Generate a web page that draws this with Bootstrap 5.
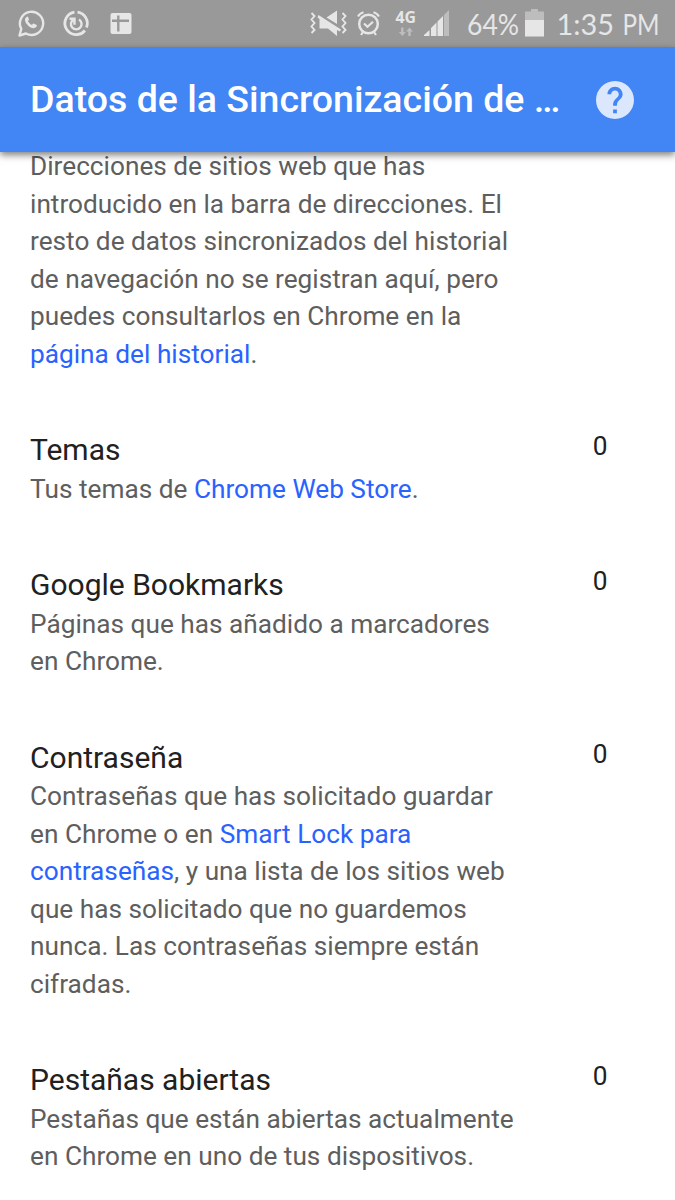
<!DOCTYPE html>
<html lang="es">
<head>
<meta charset="utf-8">
<meta name="viewport" content="width=device-width, initial-scale=1">
<title>Datos de la Sincronización de Chrome</title>
<link href="https://cdn.jsdelivr.net/npm/bootstrap@5.3.0/dist/css/bootstrap.min.css" rel="stylesheet">
<style>
body{font-family:Roboto,"Liberation Sans",sans-serif;background:#fff;color:#212121;height:1200px;overflow:hidden}
.status{height:47px;background:#999}
.topbar{height:105px;background:#4285f4;box-shadow:0 3px 7px rgba(0,0,0,.5);z-index:2;padding:0 41px 0 30px}
.topbar h1{font-size:37.5px;font-weight:500;line-height:1;letter-spacing:0;width:535px}
.content{padding:0 67.5px 0 30px;margin-top:-4px}
.entry{margin-bottom:57px}
.entry h2{font-size:30px;font-weight:400;line-height:40.5px;margin:0;letter-spacing:0}
.entry p{font-size:26.22px;line-height:37.5px;margin:0;color:#5e5e5e;white-space:nowrap}
.entry a{color:#2962ff;text-decoration:none}
.count{font-size:26.25px;line-height:32px}
</style>
</head>
<body>
<div class="status d-flex justify-content-between">
<svg width="150" height="47" viewBox="0 0 150 47" fill="none" stroke="#e6e6e6">
<path d="M19.500 35.500l1.800-6.700a11.600 11.600 0 1 1 4.600 4.700z" stroke-width="2.400" stroke-linejoin="round"/>
<path d="M26.600 17c-3 2-1.500 5.500 1.400 8.400s6.500 4 8.600 1.200c.5-.8.4-1.400-.3-1.800l-2.200-1.100c-.6-.3-1-.1-1.400.4l-.8.9c-1.800-.8-3.200-2.200-4-3.900l.9-1c.3-.4.3-.8.1-1.200l-.8-1.800c-.3-.6-.8-.7-1.500-.1z" fill="#e6e6e6" stroke="none"/>
<path d="M74.500 12.100A11.300 11.300 0 1 0 84.900 30.500M77.500 12.100A11.300 11.300 0 0 1 86.500 27.500" stroke-width="2.800"/>
<path d="M79 19.500a5.300 5.300 0 1 1-5.500 0M69.500 18.800h5v6" stroke-width="2.400"/>
<rect x="110.500" y="13" width="21" height="21" rx="2" fill="#e6e6e6" stroke="none"/>
<path d="M112 20.800h17M118.300 15.500v16" stroke="#999" stroke-width="2.400"/>
</svg>
<svg width="375" height="47" viewBox="300 0 375 47" fill="none" stroke="#e6e6e6">
<path d="M311.500 13l3 3-3 3.500 3 3.500-3 3.500 3 3.500-3 3M342.500 13l3 3-3 3.500 3 3.500-3 3.500 3 3.500-3 3" stroke-width="1.900"/>
<path d="M318.500 15l22.500 14.500-1.200 2L337 30V36l-9-7.500h-8.500V19l-2-1.500zM326.500 17.500L337 10.500V24z" fill="#e6e6e6" stroke="none"/>
<circle cx="368.500" cy="24" r="9.300" stroke-width="2.500"/>
<path d="M364 23.500l3.500 3.300 5.500-5M358 16.500q2-3.500 5.500-4.300M379 16.500q-2-3.500-5.500-4.300M363 32l-2 3M374 32l2 3" stroke-width="2.200"/>
<text x="395.500" y="23" textLength="20.500" lengthAdjust="spacingAndGlyphs" font-family="Open Sans, sans-serif" font-weight="700" font-size="15.500" fill="#e6e6e6" stroke="none">4G</text>
<path d="M403.500 27.500v4.500h2.300l-3.500 4-3.500-4h2.300v-4.500zM408.300 36v-4.500h-2.300l3.500-4 3.500 4h-2.300v4.500z" fill="#bdbdbd" stroke="none"/>
<path d="M424 36v-1l5.500-5V36zM431 36v-8l5.500-5.500V36zM437.500 36V21.500L443 16v20z" fill="#e6e6e6" stroke="none"/>
<path d="M444 36V15l5-5v26z" fill="#bdbdbd" stroke="none"/>
<g font-family="Lato, sans-serif" font-size="28" fill="#e6e6e6" stroke="none">
<text x="467" y="35" textLength="52" lengthAdjust="spacingAndGlyphs">64%</text>
<text x="556.500" y="34.500" textLength="57.500" lengthAdjust="spacingAndGlyphs">1:35</text>
<text x="622.500" y="34.500" textLength="37" lengthAdjust="spacingAndGlyphs">PM</text>
</g>
<path d="M525 20v-8.500h6V9h7v2.500h6V20z" fill="#bdbdbd" stroke="none"/>
<path d="M525 20h19v16.500h-19z" fill="#e6e6e6" stroke="none"/>
</svg>
</div>
<header class="topbar d-flex align-items-center justify-content-between position-relative text-white">
<h1 class="m-0 text-nowrap">Datos de la Sincronización de …</h1>
<svg width="38" height="38" viewBox="2 2 20 20"><path fill="#dbe7fd" d="M12 2C6.480 2 2 6.480 2 12s4.480 10 10 10 10-4.480 10-10S17.520 2 12 2zm1 17h-2v-2h2v2zm2.070-7.750l-.9.920C13.450 12.900 13 13.500 13 15h-2v-.5c0-1.100.45-2.100 1.170-2.830l1.240-1.260c.37-.36.590-.86.590-1.410 0-1.100-.9-2-2-2s-2 .9-2 2H8c0-2.210 1.790-4 4-4s4 1.790 4 4c0 .88-.36 1.680-.93 2.250z"/></svg>
</header>
<main class="content">
<section class="entry"><p>Direcciones de sitios web que has<br>introducido en la barra de direcciones. El<br>resto de datos sincronizados del historial<br>de navegación no se registran aquí, pero<br>puedes consultarlos en Chrome en la<br><a href="#">página del historial</a>.</p></section>
<section class="entry d-flex justify-content-between"><div><h2>Temas</h2><p>Tus temas de <a href="#">Chrome Web Store</a>.</p></div><span class="count">0</span></section>
<section class="entry d-flex justify-content-between"><div><h2>Google Bookmarks</h2><p>Páginas que has añadido a marcadores<br>en Chrome.</p></div><span class="count">0</span></section>
<section class="entry d-flex justify-content-between"><div><h2>Contraseña</h2><p>Contraseñas que has solicitado guardar<br>en Chrome o en <a href="#">Smart Lock para<br>contraseñas</a>, y una lista de los sitios web<br>que has solicitado que no guardemos<br>nunca. Las contraseñas siempre están<br>cifradas.</p></div><span class="count">0</span></section>
<section class="entry d-flex justify-content-between"><div><h2>Pestañas abiertas</h2><p>Pestañas que están abiertas actualmente<br>en Chrome en uno de tus dispositivos.</p></div><span class="count">0</span></section>
</main>
<script src="https://cdn.jsdelivr.net/npm/bootstrap@5.3.0/dist/js/bootstrap.bundle.min.js"></script>
</body>
</html>
